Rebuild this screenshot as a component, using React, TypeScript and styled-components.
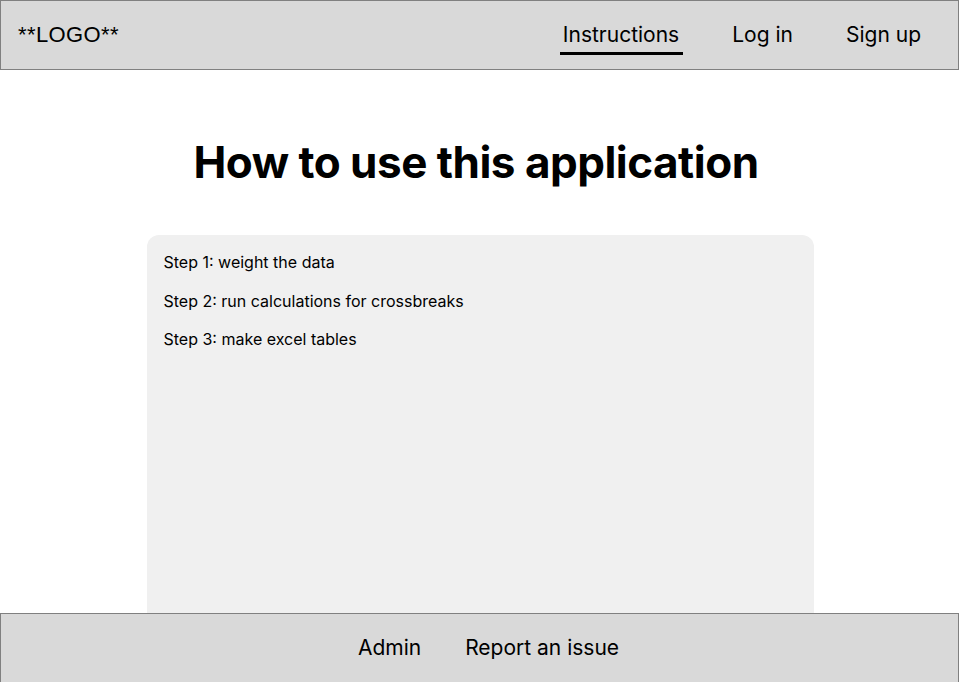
import styled, { createGlobalStyle } from 'styled-components';

const GlobalStyle = createGlobalStyle`
  * {
    box-sizing: border-box;
  }

  body {
    margin: 0;
    background: #ffffff;
    font-family: Inter, 'Noto Sans', sans-serif;
    color: #000000;
  }
`;

const steps = [
  'Step 1: weight the data',
  'Step 2: run calculations for crossbreaks',
  'Step 3: make excel tables',
];

export default function App() {
  return (
    <>
      <GlobalStyle />
      <Page>
        <Header>
          <Logo>**LOGO**</Logo>
          <Nav>
            <NavLink $active>Instructions</NavLink>
            <NavLink>Log in</NavLink>
            <NavLink>Sign up</NavLink>
          </Nav>
        </Header>

        <Main>
          <Title>How to use this application</Title>
          <Card>
            {steps.map((step) => (
              <Step key={step}>{step}</Step>
            ))}
          </Card>
        </Main>

        <Footer>
          <FooterLink>Admin</FooterLink>
          <FooterLink>Report an issue</FooterLink>
        </Footer>
      </Page>
    </>
  );
}

const Page = styled.div`
  min-height: 100vh;
  display: flex;
  flex-direction: column;
`;

const Header = styled.header`
  height: 70px;
  background: #d9d9d9;
  border: 1px solid #808080;
  display: flex;
  align-items: center;
  justify-content: space-between;
  padding: 0 37px 0 17px;
`;

const Logo = styled.div`
  font-family: 'Liberation Sans', Arial, sans-serif;
  font-size: 22px;
  letter-spacing: 0.4px;
  margin-top: -1px;
`;

const Nav = styled.nav`
  display: flex;
  gap: 53px;
`;

const NavLink = styled.a<{ $active?: boolean }>`
  position: relative;
  font-size: 21px;
  line-height: 24px;
  cursor: pointer;

  &::after {
    content: '';
    display: ${({ $active }) => ($active ? 'block' : 'none')};
    position: absolute;
    left: -3px;
    right: -4px;
    bottom: -8px;
    height: 3px;
    background: #000000;
  }
`;

const Main = styled.main`
  flex: 1;
  display: flex;
  flex-direction: column;
  align-items: center;
  padding-top: 69px;
`;

const Title = styled.h1`
  margin: 0 0 0 -7px;
  font-size: 44px;
  font-weight: 700;
  line-height: 46px;
  letter-spacing: -0.5px;
`;

const Card = styled.section`
  margin: 50px 0 0 1px;
  width: 667px;
  height: 400px;
  background: #f0f0f0;
  border-radius: 12px;
  padding: 17px 17px;
  display: flex;
  flex-direction: column;
  gap: 18.5px;
`;

const Step = styled.p`
  margin: 0;
  font-size: 16px;
  line-height: 20px;
`;

const Footer = styled.footer`
  position: fixed;
  left: 0;
  right: 0;
  bottom: 0;
  height: 69px;
  background: #d9d9d9;
  border: 1px solid #808080;
  border-bottom: none;
  display: flex;
  align-items: center;
  justify-content: center;
  gap: 44px;
  padding-left: 18px;
`;

const FooterLink = styled.a`
  font-size: 21px;
  line-height: 24px;
  cursor: pointer;
`;
